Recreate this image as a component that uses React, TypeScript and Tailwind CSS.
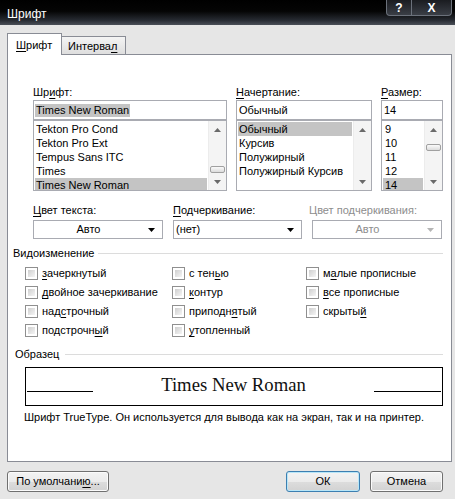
import React from "react";

function U({ c }: { c: string }) {
  return <span className="underline decoration-1 underline-offset-2">{c}</span>;
}

function Tri({ dir, color }: { dir: "up" | "down"; color: string }) {
  return (
    <svg width="7" height="4" viewBox="0 0 7 4">
      {dir === "up" ? (
        <path d="M0 4 L3.5 0 L7 4 Z" fill={color} />
      ) : (
        <path d="M0 0 L7 0 L3.5 4 Z" fill={color} />
      )}
    </svg>
  );
}

function ScrollBar({ thumb }: { thumb?: string }) {
  return (
    <div className="flex w-[18px] flex-col bg-[#f4f4f4] border-l border-[#ececec]">
      <div className="flex h-[17px] items-center justify-center">
        <Tri dir="up" color="#6a6a6a" />
      </div>
      <div className="flex-1">
        {thumb && (
          <div
            className={
              thumb +
              " mx-auto h-[7px] w-[15px] rounded-[2px] border border-[#a0a0a0] bg-[linear-gradient(to_bottom,#fafafa,#dcdcdc)]"
            }
          />
        )}
      </div>
      <div className="flex h-[17px] items-center justify-center">
        <Tri dir="down" color="#6a6a6a" />
      </div>
    </div>
  );
}

function ListBox({
  items,
  selected,
  thumb,
  pad,
}: {
  items: string[];
  selected: string;
  thumb?: string;
  pad: string;
}) {
  return (
    <div className="flex h-[71px] border border-[#a9abb2] bg-white">
      <div className="flex-1 overflow-hidden px-px pt-px">
        {items.map((it) => (
          <div
            key={it}
            className={
              (it === selected ? "bg-[#c4c4c4] " : "") +
              pad +
              " h-[14px] whitespace-nowrap leading-[14px]"
            }
          >
            {it}
          </div>
        ))}
      </div>
      <ScrollBar thumb={thumb} />
    </div>
  );
}

function Combo({
  text,
  center,
  disabled,
}: {
  text: string;
  center?: boolean;
  disabled?: boolean;
}) {
  return (
    <div className="flex h-[19px] items-center border border-[#a9abb2] bg-white">
      <div
        className={
          (center ? "text-center " : "pl-[2px] ") +
          (disabled ? "text-[#8d8d8d] " : "") +
          "flex-1 leading-[13px]"
        }
      >
        {text}
      </div>
      <div className="flex w-[19px] items-center justify-center pr-[2px]">
        <Tri dir="down" color={disabled ? "#b5b5b5" : "#000000"} />
      </div>
    </div>
  );
}

function Check({ children }: { children: React.ReactNode }) {
  return (
    <div className="flex h-[19px] items-center gap-[4px]">
      <div className="h-[13px] w-[13px] border border-[#8f8f8f] bg-white p-[2px]">
        <div className="h-full w-full bg-[linear-gradient(135deg,#cfcfcf,#f5f5f5)]" />
      </div>
      <div className="whitespace-nowrap leading-[13px]">{children}</div>
    </div>
  );
}

function Btn({
  children,
  w,
  primary,
}: {
  children: React.ReactNode;
  w: string;
  primary?: boolean;
}) {
  return (
    <div
      className={
        w +
        (primary
          ? " border-[#3c7fb1] shadow-[inset_0_0_0_1px_#b8e6f8]"
          : " border-[#707070] shadow-[inset_0_0_0_1px_#fbfbfb]") +
        " flex h-[21px] items-center justify-center rounded-[3px] border bg-[linear-gradient(to_bottom,#f3f3f3_0%,#ebebeb_50%,#dddddd_50%,#d2d2d2_100%)]"
      }
    >
      {children}
    </div>
  );
}

export default function App() {
  return (
    <div className="flex h-[499px] w-[455px] flex-col overflow-hidden bg-[#e6e6e6] font-['Liberation_Sans',Arial,sans-serif] text-[11px] text-black">
      {/* Title bar */}
      <div className="flex h-[25px] shrink-0 items-start justify-between bg-[linear-gradient(to_bottom,#000000_0%,#050505_45%,#262a31_80%,#4a4f58_100%)]">
        <div className="pl-[7px] pt-[7px] text-[12px] leading-[15px] text-white">Шрифт</div>
        <div className="mr-[3px] flex h-[16px] rounded-b-[4px] border border-t-0 border-[#6b717b] bg-[linear-gradient(to_bottom,#1a1c20,#3a3e46)]">
          <div className="flex w-[25px] items-center justify-center border-r border-[#6b717b] text-[12px] font-bold leading-none text-white">
            ?
          </div>
          <div className="flex w-[39px] items-center justify-center text-[12px] font-bold leading-none text-white">
            X
          </div>
        </div>
      </div>

      {/* Tabs */}
      <div className="mt-[8px] flex items-end px-[7px]">
        <div className="relative z-10 -mb-px flex h-[22px] w-[55px] items-start border border-b-0 border-[#898c95] bg-white pl-[8px] pt-[5px]">
          <span className="leading-[13px]">
            <U c="Ш" />
            рифт
          </span>
        </div>
        <div className="flex h-[18px] w-[64px] items-start border border-b-0 border-l-0 border-[#898c95] bg-[linear-gradient(to_bottom,#f4f4f4,#dedede)] pl-[6px] pt-[3px]">
          <span className="leading-[13px]">
            Интерва
            <U c="л" />
          </span>
        </div>
      </div>

      {/* Panel */}
      <div className="mx-[7px] flex h-[408px] w-[445px] shrink-0 flex-col border border-[#898c95] bg-white">
        {/* Font / style / size */}
        <div className="mt-[31px] flex gap-[9px] pl-[25px]">
          <div className="flex w-[194px] flex-col">
            <div className="h-[13px] leading-[13px]">
              Шр
              <U c="и" />
              фт:
            </div>
            <div className="mt-px flex h-[20px] items-center border border-[#a9abb2] pl-[1px]">
              <span className="bg-[#c4c4c4] px-px leading-[13px]">Times New Roman</span>
            </div>
            <ListBox
              items={["Tekton Pro Cond", "Tekton Pro Ext", "Tempus Sans ITC", "Times", "Times New Roman"]}
              selected="Times New Roman"
              thumb="mt-[28px]"
              pad="pl-[1px]"
            />
          </div>
          <div className="flex w-[136px] flex-col">
            <div className="h-[13px] leading-[13px]">
              <U c="Н" />
              ачертание:
            </div>
            <div className="mt-px flex h-[20px] items-center border border-[#a9abb2] pl-[2px]">
              <span className="leading-[13px]">Обычный</span>
            </div>
            <ListBox
              items={["Обычный", "Курсив", "Полужирный", "Полужирный Курсив"]}
              selected="Обычный"
              pad="pl-[1px]"
            />
          </div>
          <div className="flex w-[62px] flex-col">
            <div className="h-[13px] leading-[13px]">
              <U c="Р" />
              азмер:
            </div>
            <div className="mt-px flex h-[20px] items-center border border-[#a9abb2] pl-[2px]">
              <span className="leading-[13px]">14</span>
            </div>
            <ListBox items={["9", "10", "11", "12", "14"]} selected="14" thumb="mt-[6px]" pad="pl-[2px]" />
          </div>
        </div>

        {/* Color / underline */}
        <div className="mt-[13px] grid grid-cols-[130px_129px_130px] gap-x-[10px] pl-[25px]">
          <div className="h-[13px] leading-[13px]">
            <U c="Ц" />
            вет текста:
          </div>
          <div className="h-[13px] leading-[13px]">
            <U c="П" />
            одчеркивание:
          </div>
          <div className="-ml-[3px] h-[13px] leading-[13px] text-[#8d8d8d]">Цвет подчеркивания:</div>
          <div className="mt-[3px]">
            <Combo text="Авто" center />
          </div>
          <div className="mt-[3px]">
            <Combo text="(нет)" />
          </div>
          <div className="mt-[3px]">
            <Combo text="Авто" center disabled />
          </div>
        </div>

        {/* Видоизменение */}
        <div className="mt-[8px] flex h-[13px] items-center pl-[5px] pr-[8px]">
          <span className="leading-[13px]">Видоизменение</span>
          <div className="ml-[4px] h-px flex-1 bg-[#dcdcdc]" />
        </div>
        <div className="mt-[4px] grid grid-cols-[147px_134px_1fr] pl-[17px]">
          <div className="flex flex-col">
            <Check>
              <U c="з" />
              ачеркнутый
            </Check>
            <Check>
              <U c="д" />
              войное зачеркивание
            </Check>
            <Check>
              над
              <U c="с" />
              трочный
            </Check>
            <Check>
              подстрочн
              <U c="ы" />й
            </Check>
          </div>
          <div className="flex flex-col">
            <Check>
              с тен
              <U c="ь" />ю
            </Check>
            <Check>
              <U c="к" />
              онтур
            </Check>
            <Check>
              приподн
              <U c="я" />
              тый
            </Check>
            <Check>
              <U c="у" />
              топленный
            </Check>
          </div>
          <div className="flex flex-col">
            <Check>
              м<U c="а" />
              лые прописные
            </Check>
            <Check>
              <U c="в" />
              се прописные
            </Check>
            <Check>
              скрыты
              <U c="й" />
            </Check>
          </div>
        </div>

        {/* Образец */}
        <div className="mt-[8px] flex h-[13px] items-center pl-[7px] pr-[8px]">
          <span className="leading-[13px]">Образец</span>
          <div className="ml-[6px] h-px flex-1 bg-[#dcdcdc]" />
        </div>
        <div className="ml-[17px] mt-[6px] flex h-[39px] w-[418px] items-start border border-black px-[1px]">
          <div className="mt-[23px] h-px w-[66px] bg-black" />
          <div className="mt-[6px] flex-1 text-center font-['Liberation_Serif','Times_New_Roman',serif] text-[18.7px] leading-[22px] text-[#111]">
            Times New Roman
          </div>
          <div className="mt-[23px] h-px w-[67px] bg-black" />
        </div>
        <div className="mt-[5px] pl-[16px] leading-[13px]">
          Шрифт TrueType. Он используется для вывода как на экран, так и на принтер.
        </div>
      </div>

      {/* Buttons */}
      <div className="mt-[9px] flex px-[7px]">
        <Btn w="w-[102px]">
          <span className="leading-[13px]">
            По умолчани
            <U c="ю" />
            ...
          </span>
        </Btn>
        <div className="flex-1" />
        <Btn w="w-[74px]" primary>
          <span className="leading-[13px]">ОК</span>
        </Btn>
        <div className="w-[10px]" />
        <Btn w="w-[73px]">
          <span className="leading-[13px]">Отмена</span>
        </Btn>
        <div className="w-[5px]" />
      </div>
    </div>
  );
}
